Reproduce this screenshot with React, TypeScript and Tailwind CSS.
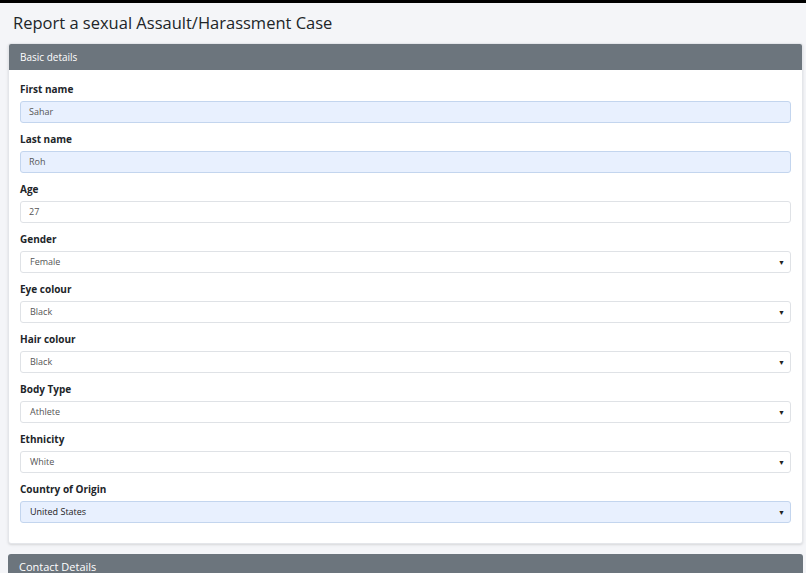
import React from 'react';

type Field = {
  label: string;
  value: string;
  kind: 'input' | 'select';
  filled?: boolean;
  strong?: boolean;
};

const fields: Field[] = [
  { label: 'First name', value: 'Sahar', kind: 'input', filled: true },
  { label: 'Last name', value: 'Roh', kind: 'input', filled: true },
  { label: 'Age', value: '27', kind: 'input' },
  { label: 'Gender', value: 'Female', kind: 'select' },
  { label: 'Eye colour', value: 'Black', kind: 'select' },
  { label: 'Hair colour', value: 'Black', kind: 'select' },
  { label: 'Body Type', value: 'Athlete', kind: 'select' },
  { label: 'Ethnicity', value: 'White', kind: 'select' },
  { label: 'Country of Origin', value: 'United States', kind: 'select', filled: true, strong: true },
];

const FormField: React.FC<{ field: Field }> = ({ field }) => {
  const box = field.filled
    ? 'bg-[#e8f0fe] border-[#c3d5ee]'
    : 'bg-white border-[#dfe2e6]';
  return (
    <div className="mb-[10px]">
      <div className="text-[10px] leading-[13px] font-bold text-[#212529] mb-[5px]">{field.label}</div>
      <div
        className={`h-[22px] flex items-center justify-between rounded-[3px] border ${box} ${
          field.kind === 'select' ? 'pl-[9px]' : 'pl-[8px]'
        } pr-[5px]`}
      >
        <span className={`text-[9px] ${field.strong ? 'text-[#222]' : 'text-[#555]'}`}>{field.value}</span>
        {field.kind === 'select' && <span className="text-[7px] text-[#222] leading-none">▼</span>}
      </div>
    </div>
  );
};

const App: React.FC = () => {
  return (
    <div
      className="min-h-screen bg-[#f4f5f8] border-t-[3px] border-black overflow-hidden"
      style={{ fontFamily: '"Open Sans", "Noto Sans", sans-serif' }}
    >
      {/* Page title */}
      <h1 className="px-[13px] pt-[8px] pb-[9px] text-[16.5px] leading-[23px] font-medium text-[#212529]">
        Report a sexual Assault/Harassment Case
      </h1>

      <div className="pl-[8px] pr-[3px]">
        {/* Basic details card */}
        <div className="bg-white rounded-[3px] border border-[#e4e6ea] shadow-sm overflow-hidden">
          <div className="h-[26px] bg-[#6c757d] flex items-center px-[11px] text-[10px] text-white">Basic details</div>
          <div className="px-[11px] pt-[13px] pb-[10px]">
            {fields.map((f) => (
              <FormField key={f.label} field={f} />
            ))}
          </div>
        </div>

        {/* Contact details card */}
        <div className="mt-[10px] rounded-t-[3px] overflow-hidden">
          <div className="h-[26px] bg-[#6c757d] flex items-center px-[11px] text-[11px] text-white">Contact Details</div>
        </div>
      </div>
    </div>
  );
};

export default App;
